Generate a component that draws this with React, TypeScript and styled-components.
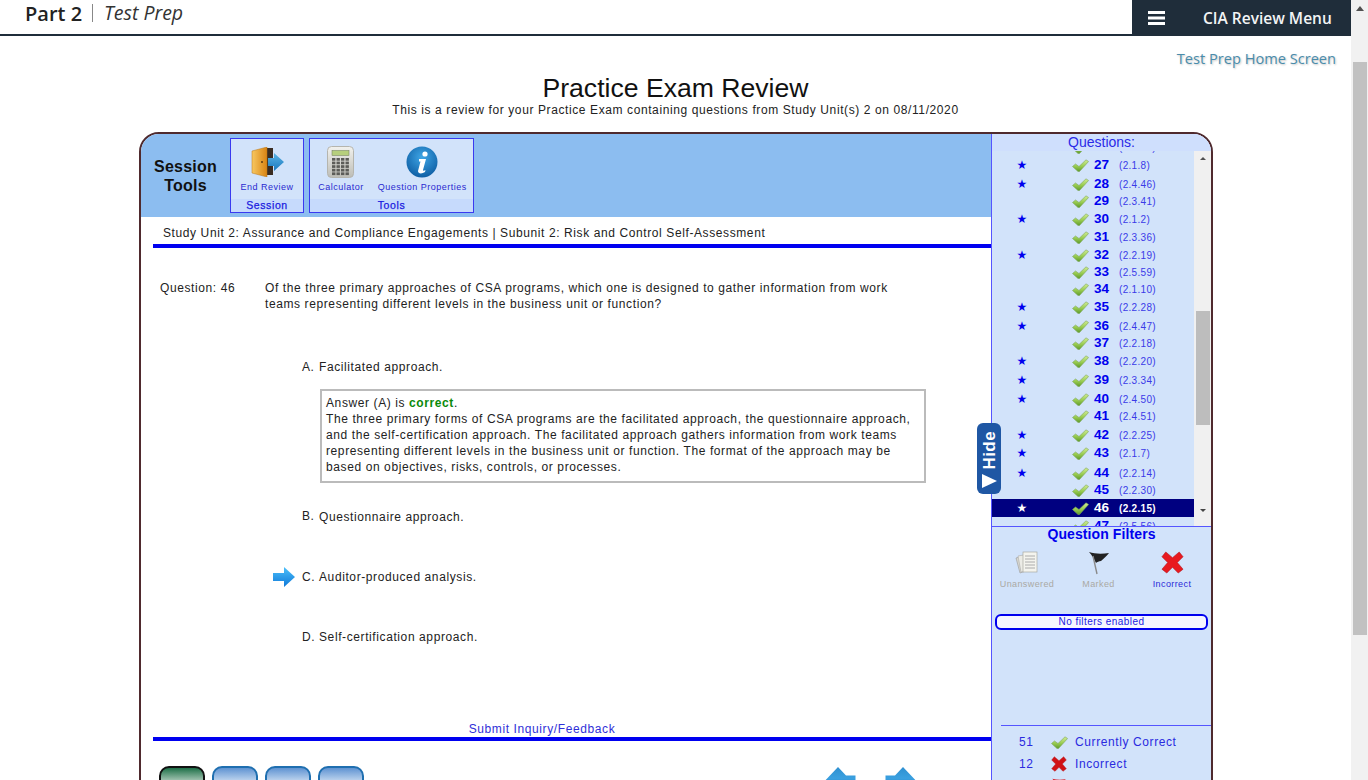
import React, { useId } from "react";
import styled, { createGlobalStyle } from "styled-components";

const Global = createGlobalStyle`
  html, body { margin: 0; padding: 0; overflow: hidden; background: #fff; }
  * { box-sizing: border-box; }
  #root { width: 1368px; height: 780px; overflow: hidden; }
`;

const Shell = styled.div`
  display: flex;
  width: 1368px;
  height: 780px;
  overflow: hidden;
  font-family: "Liberation Sans", Arial, sans-serif;
  font-size: 12px;
  letter-spacing: 0.6px;
  color: #222;
`;
const Page = styled.div`
  width: 1351px;
  flex: none;
  display: flex;
  flex-direction: column;
`;
const PageScroll = styled.div`
  width: 17px;
  flex: none;
  background: #f1f1f1;
  display: flex;
  flex-direction: column;
  align-items: center;
`;
const PageThumb = styled.div`
  width: 14px;
  height: 573px;
  margin-top: 51px;
  background: #c1c1c1;
`;
const ArrowUp = styled.div`
  width: 0;
  height: 0;
  margin-top: 6px;
  border-left: 4px solid transparent;
  border-right: 4px solid transparent;
  border-bottom: 5px solid #505050;
`;
const Header = styled.header`
  height: 36px;
  flex: none;
  display: flex;
  justify-content: space-between;
  border-bottom: 2px solid #1f2d3a;
  font-family: "Open Sans", sans-serif;
  letter-spacing: 0;
`;
const Crumb = styled.div`
  display: flex;
  align-items: center;
  height: 26px;
  padding-left: 25px;
`;
const Part = styled.span`
  font-size: 20px;
  font-weight: 600;
  color: #222;
`;
const Sep = styled.span`
  width: 1px;
  height: 18px;
  margin: 0 11px 0 10px;
  background: #888;
`;
const Prep = styled.span`
  font-size: 19.5px;
  font-style: italic;
  color: #333;
  margin-top: -2px;
`;
const Menu = styled.div`
  width: 219px;
  height: 36px;
  display: flex;
  align-items: center;
  padding: 0 0 0 16px;
  background: #1f2d3a;
  color: #fff;
  font-size: 15.5px;
  font-weight: 600;
`;
const MenuLabel = styled.span`
  margin-left: 38px;
  color: #f2f4f5;
`;
const HomeLink = styled.div`
  margin-top: 12px;
  padding-right: 15px;
  text-align: right;
  font-family: "Open Sans", sans-serif;
  letter-spacing: 0;
  font-size: 14.6px;
  line-height: 20px;
  color: #4a8cab;
  text-shadow: 1px 1px 2px #c4c4c4;
`;
const Title = styled.h1`
  margin: 5px 0 0;
  font-size: 26.6px;
  line-height: 30px;
  font-weight: 400;
  letter-spacing: 0;
  text-align: center;
  color: #111;
`;
const Subtitle = styled.div`
  text-align: center;
  line-height: 14px;
  color: #222;
`;
const Panel = styled.section`
  flex: none;
  width: 1074px;
  height: 700px;
  margin: 15px 0 0 139px;
  display: flex;
  border: 2px solid #4f2a2e;
  border-radius: 20px 20px 0 0;
  overflow: hidden;
`;
const Work = styled.div`
  width: 850px;
  flex: none;
`;
const Toolbar = styled.div`
  height: 83px;
  display: flex;
  padding-top: 4px;
  background: #8cbdf0;
`;
const ToolHeading = styled.div`
  width: 89px;
  padding-top: 19px;
  font-size: 16px;
  line-height: 19px;
  font-weight: 700;
  letter-spacing: 0.2px;
  text-align: center;
  color: #111;
`;
const ToolBox = styled.div<{ $w: number; $inset?: number }>`
  width: ${(p) => p.$w}px;
  height: 75px;
  margin-right: 5px;
  display: flex;
  flex-direction: column;
  border: 1px solid #3a3af0;
  background: #d2e3fa;
`;
const ToolBody = styled.div<{ $inset?: number }>`
  flex: 1;
  display: flex;
  justify-content: center;
  gap: 14px;
  padding-left: ${(p) => p.$inset ?? 0}px;
`;
const ToolItem = styled.div`
  display: flex;
  flex-direction: column;
  align-items: center;
  padding-top: 4px;
  font-size: 9px;
  line-height: 11px;
  letter-spacing: 0.5px;
  color: #2a2ad0;
`;
const ToolIcon = styled.div`
  height: 37px;
  margin-bottom: 2px;
  display: flex;
  align-items: center;
`;
const ToolGroup = styled.div`
  height: 13px;
  background: #c6dafc;
  color: #1a1ae0;
  font-size: 10.5px;
  line-height: 13px;
  font-weight: 400;
  -webkit-text-stroke: 0.25px #1a1ae0;
  text-align: center;
`;
const UnitLine = styled.div`
  height: 27px;
  padding: 9px 0 0 22px;
  line-height: 14px;
`;
const BlueRule = styled.div`
  height: 4px;
  margin-left: 12px;
  background: #0000f0;
`;
const QuestionRow = styled.div`
  display: grid;
  grid-template-columns: 105px 640px;
  margin: 32px 0 0 19px;
  line-height: 16px;
`;
const Options = styled.div`
  margin: 47px 0 0 132px;
`;
const OptionRow = styled.div<{ $gap: number }>`
  display: grid;
  grid-template-columns: 29px 17px 1fr;
  grid-template-rows: 16px;
  margin-top: ${(p) => p.$gap}px;
  line-height: 16px;
  align-items: center;
`;
const OptionKey = styled.span<{ $raised?: boolean }>`
  margin-top: ${(p) => (p.$raised ? -3 : 0)}px;
`;
const Explain = styled.div`
  width: 606px;
  height: 94px;
  margin: 14px 0 0 47px;
  padding: 4px 4px;
  border: 2px solid #bbb;
  line-height: 16px;
`;
const Correct = styled.b`
  color: #0a8a0a;
`;
const Inquiry = styled.div`
  margin: 76px 0 0 12px;
  padding-right: 60px;
  line-height: 16px;
  text-align: center;
  color: #3030d8;
`;
const BottomRule = styled(BlueRule)`
  margin-top: 0;
`;
const AnswerBar = styled.div`
  display: flex;
  margin: 25px 0 0 18px;
  align-items: flex-start;
`;
const Key = styled.div<{ $active?: boolean }>`
  width: 46px;
  height: 40px;
  margin-right: 7px;
  padding-top: 9px;
  border: 2px solid ${(p) => (p.$active ? "#111" : "#1f6fb0")};
  border-radius: 10px;
  background: linear-gradient(
    ${(p) => (p.$active ? "#1e7048, #dbe8e0 50%" : "#5f93d2, #e4eef9 50%")}
  );
  font-size: 17px;
  font-weight: 700;
  text-align: center;
  color: #111;
`;
const Tip = styled.div`
  margin: 12px 0 0 97px;
  width: 12px;
`;
const NavArrows = styled.div`
  display: flex;
  gap: 29px;
  margin: 1px 0 0 340px;
`;
const Side = styled.aside`
  position: relative;
  width: 220px;
  flex: none;
  border-left: 1px solid #5555ff;
  background: #d2e3fa;
`;
const SideHead = styled.div`
  height: 17px;
  background: #cfdffd;
  color: #2a2ae8;
  font-size: 14px;
  line-height: 17px;
  letter-spacing: 0;
  text-align: center;
`;
const ListWrap = styled.div`
  height: 375px;
  display: flex;
  overflow: hidden;
`;
const List = styled.div`
  width: 202px;
  flex: none;
  overflow: hidden;
`;
const ListInner = styled.div`
  margin-top: -13px;
`;
const Row = styled.div<{ $h: number; $on?: boolean }>`
  height: ${(p) => p.$h}px;
  display: grid;
  grid-template-columns: 60px 20px 18px 4px 25px 1fr;
  line-height: 18px;
  color: ${(p) => (p.$on ? "#fff" : "#0000ee")};
  background: ${(p) => (p.$on ? "#000080" : "transparent")};
`;
const Star = styled.span`
  grid-column: 1;
  text-align: center;
  font-size: 12px;
  letter-spacing: 0;
  font-family: "DejaVu Sans", sans-serif;
`;
const RowCheck = styled.span`
  grid-column: 3;
  display: flex;
  align-items: center;
  height: 18px;
`;
const Num = styled.span`
  grid-column: 5;
  font-size: 13.5px;
  font-weight: 700;
  letter-spacing: 0;
`;
const Code = styled.span<{ $on?: boolean }>`
  grid-column: 6;
  padding-top: 1px;
  font-size: 10px;
  color: ${(p) => (p.$on ? "#fff" : "#3a3ae8")};
  font-weight: ${(p) => (p.$on ? 700 : 400)};
  letter-spacing: 0.3px;
`;
const ListScroll = styled.div`
  flex: 1;
  background: #f0f0f0;
  display: flex;
  flex-direction: column;
  align-items: center;
`;
const ListThumb = styled.div`
  width: 14px;
  height: 114px;
  margin-top: 151px;
  background: #bdbdbd;
`;
const ArrowDown = styled.div`
  width: 0;
  height: 0;
  margin-top: 84px;
  border-left: 3px solid transparent;
  border-right: 3px solid transparent;
  border-top: 3px solid #444;
`;
const SmallUp = styled(ArrowUp)`
  border-left-width: 3px;
  border-right-width: 3px;
  border-bottom-width: 3px;
`;
const Filters = styled.div`
  height: 199px;
  border-top: 1px solid #5555ff;
`;
const FilterTitle = styled.div`
  font-size: 14px;
  line-height: 15px;
  font-weight: 700;
  letter-spacing: 0.1px;
  text-align: center;
  color: #0000ee;
`;
const FilterGrid = styled.div`
  display: grid;
  grid-template-columns: 70px 73px 74px;
  margin-top: 6px;
`;
const FilterItem = styled.div<{ $on?: boolean }>`
  display: flex;
  flex-direction: column;
  align-items: center;
  font-size: 9px;
  line-height: 11px;
  letter-spacing: 0.4px;
  color: ${(p) => (p.$on ? "#2a2ad8" : "#aaa9a4")};
`;
const FilterIcon = styled.div`
  height: 29px;
  margin-bottom: 2px;
  display: flex;
  align-items: center;
`;
const Pill = styled.div`
  height: 16px;
  margin: 24px 3px 0;
  border: 2px solid #0000ee;
  border-radius: 6px;
  background: #f6f6ff;
  font-size: 10px;
  line-height: 12px;
  letter-spacing: 0.45px;
  text-align: center;
  color: #1a1ae0;
`;
const Legend = styled.div`
  margin-left: 9px;
  padding-top: 5px;
  border-top: 1px solid #5555ff;
`;
const LegendRow = styled.div`
  display: grid;
  grid-template-columns: 32px 18px 1fr;
  align-items: center;
  height: 22px;
  padding-left: 18px;
  color: #2a2ae0;
`;
const LegendLabel = styled.span`
  padding-left: 6px;
`;
const HideTab = styled.div`
  position: absolute;
  left: -15px;
  top: 289px;
  width: 24px;
  height: 71px;
  display: flex;
  flex-direction: column;
  align-items: center;
  justify-content: flex-end;
  gap: 5px;
  padding-bottom: 6px;
  border-radius: 6px;
  background: #1f57a4;
  color: #fff;
`;
const HideText = styled.span`
  writing-mode: vertical-rl;
  transform: rotate(180deg);
  font-size: 17px;
  line-height: 17px;
  font-weight: 700;
  letter-spacing: 0.4px;
`;

const Check = ({ w = 17 }: { w?: number }) => {
  const id = useId();
  return (
    <svg width={w} height={(w * 13) / 17} viewBox="0 0 17 13">
      <defs>
        <linearGradient id={id} x1="0" y1="0" x2="0" y2="1">
          <stop offset="0" stopColor="#d2ec96" />
          <stop offset=".55" stopColor="#98cc50" />
          <stop offset="1" stopColor="#5f9a2c" />
        </linearGradient>
      </defs>
      <path d="M.5 7.500L3.500 5 7 7.500 14 .8l2.600 1.700L7.500 12.500H6z" fill={`url(#${id})`} stroke="#7ca65c" strokeWidth="0.6" strokeLinejoin="round" />
    </svg>
  );
};
const Cross = ({ s = 23, fill = "#e8191f" }: { s?: number; fill?: string }) => (
  <svg width={s} height={s} viewBox="0 0 24 24">
    <path d="M5 1l7 6 7-6 4 5-6 6 6 7-5 4-6-6-6 6-5-4 6-7-6-6z" fill={fill} stroke="#b3141a" strokeWidth="0.6" strokeLinejoin="round" />
  </svg>
);
const RedFlag = () => (
  <svg width="16" height="16" viewBox="0 0 22 24">
    <path d="M1 1c6 2 13 2 20 1-2 3-5 5-8 8-2 0-4 1-5 2C6 8 4 4 1 1z" fill="#d81820" />
  </svg>
);
const Flag = () => (
  <svg width="22" height="24" viewBox="0 0 22 24">
    <path d="M1 1c6 2 13 2 20 1-2 3-5 5-8 8-2 0-4 1-5 2C6 8 4 4 1 1z" fill="#222" />
    <path d="M5 5l4 18" stroke="#8a8a8a" strokeWidth="1.4" />
  </svg>
);
const Papers = () => (
  <svg width="24" height="24" viewBox="0 0 24 24">
    <path d="M1 7l10-3 3 15-9 3z" fill="#d8d8d0" stroke="#999" strokeWidth=".6" />
    <path d="M3 5l11-2 2 16-10 2z" fill="#ecece6" stroke="#aaa" strokeWidth=".6" />
    <rect x="8" y="1" width="14" height="20" fill="#f4f4ee" stroke="#a8a8a0" strokeWidth=".7" />
    <path d="M10 5h10M10 8h10M10 11h10M10 14h10M10 17h10" stroke="#999" strokeWidth=".8" />
  </svg>
);
const Door = () => (
  <svg width="33" height="30" viewBox="0 0 33 30">
    <defs>
      <linearGradient id="doorG" x1="0" y1="0" x2="1" y2="0">
        <stop offset="0" stopColor="#f7c760" />
        <stop offset="1" stopColor="#d98414" />
      </linearGradient>
      <linearGradient id="doorA" x1="0" y1="0" x2="0" y2="1">
        <stop offset="0" stopColor="#5bb4e6" />
        <stop offset="1" stopColor="#1a78bd" />
      </linearGradient>
    </defs>
    <rect x="13" y="1" width="9" height="27" fill="#3a2c22" />
    <path d="M1 4L16 0v30L1 26z" fill="url(#doorG)" stroke="#b87414" strokeWidth=".5" />
    <circle cx="11" cy="15" r="1" fill="#5a3a10" />
    <path d="M17 11h6V6l10 9-10 9v-5h-6z" fill="url(#doorA)" />
  </svg>
);
const Calc = () => (
  <svg width="27" height="32" viewBox="0 0 27 32">
    <defs>
      <linearGradient id="calcG" x1="0" y1="0" x2="0" y2="1">
        <stop offset="0" stopColor="#f2f2ee" />
        <stop offset="1" stopColor="#bdbdb6" />
      </linearGradient>
    </defs>
    <rect x="0.5" y="0.5" width="26" height="31" rx="4" fill="url(#calcG)" stroke="#b5b5ae" />
    <rect x="5" y="4.500" width="17" height="5" fill="#b6cf7c" stroke="#6d7a58" strokeWidth=".5" />
    {[0, 1, 2, 3, 4].map((r) =>
      [0, 1, 2, 3].map((c) => (
        <rect key={`${r}-${c}`} x={5 + c * 4.5} y={12 + r * 3.6} width="3.4" height="2.7" fill="#5c5c58" />
      ))
    )}
  </svg>
);
const Info = () => (
  <svg width="32" height="32" viewBox="0 0 32 32">
    <defs>
      <radialGradient id="infoG" cx=".5" cy=".35" r=".7">
        <stop offset="0" stopColor="#3fa6e6" />
        <stop offset="1" stopColor="#0b5aa0" />
      </radialGradient>
    </defs>
    <circle cx="16" cy="16" r="15.500" fill="url(#infoG)" />
    <circle cx="19" cy="8" r="2.600" fill="#fff" />
    <path d="M13 13h7l-3 11c-.2 1 .8 1 2.500 0l-.5 2c-3 2-7 2-7-1l2.500-9.500H13z" fill="#fff" />
  </svg>
);
const BlueArrow = () => {
  const id = useId();
  return (
    <svg width="22" height="20" viewBox="0 0 22 20">
      <defs>
        <linearGradient id={id} x1="0" y1="0" x2="0" y2="1">
          <stop offset="0" stopColor="#4cc0fa" />
          <stop offset="1" stopColor="#0f78d8" />
        </linearGradient>
      </defs>
      <path d="M0 6h11V0l11 10-11 10v-6H0z" fill={`url(#${id})`} />
    </svg>
  );
};
const NavArrow = ({ flip }: { flip?: boolean }) => {
  const id = useId();
  return (
    <svg width="36" height="30" viewBox="0 0 36 30" style={flip ? { transform: "scaleX(-1)" } : undefined}>
      <defs>
        <linearGradient id={id} x1="0" y1="0" x2="0" y2="1">
          <stop offset="0" stopColor="#2e8fd0" />
          <stop offset=".4" stopColor="#3aa0e0" />
          <stop offset="1" stopColor="#1a6cb4" />
        </linearGradient>
      </defs>
      <path d="M0 19L18 0l8 8.500h9.500V28H18z" fill={`url(#${id})`} />
    </svg>
  );
};
const Burger = () => (
  <svg width="17" height="14" viewBox="0 0 17 14">
    <path d="M0 1.500h17M0 7h17M0 12.500h17" stroke="#fff" strokeWidth="3" />
  </svg>
);
const Triangle = () => (
  <svg width="15" height="14" viewBox="0 0 15 14">
    <path d="M0 0l15 7L0 14z" fill="#fff" />
  </svg>
);
const TipArrow = () => (
  <svg width="12" height="4" viewBox="0 0 12 4">
    <path d="M6 0l4 4H2z" fill="#2e8fd0" />
  </svg>
);

const rows: [number, string, boolean, number][] = [
  [26, "2.3.30", false, 18],
  [27, "2.1.8", true, 19],
  [28, "2.4.46", true, 17],
  [29, "2.3.41", false, 18],
  [30, "2.1.2", true, 18],
  [31, "2.3.36", false, 18],
  [32, "2.2.19", true, 17],
  [33, "2.5.59", false, 17],
  [34, "2.1.10", false, 18],
  [35, "2.2.28", true, 19],
  [36, "2.4.47", true, 17],
  [37, "2.2.18", false, 18],
  [38, "2.2.20", true, 19],
  [39, "2.3.34", true, 19],
  [40, "2.4.50", true, 17],
  [41, "2.4.51", false, 19],
  [42, "2.2.25", true, 18],
  [43, "2.1.7", true, 20],
  [44, "2.2.14", true, 17],
  [45, "2.2.30", false, 18],
  [46, "2.2.15", true, 18],
  [47, "2.5.56", false, 18],
];

export default function App() {
  return (
    <Shell>
      <Global />
      <Page>
        <Header>
          <Crumb>
            <Part>Part 2</Part>
            <Sep />
            <Prep>Test Prep</Prep>
          </Crumb>
          <Menu>
            <Burger />
            <MenuLabel>CIA Review Menu</MenuLabel>
          </Menu>
        </Header>
        <HomeLink>Test Prep Home Screen</HomeLink>
        <Title>Practice Exam Review</Title>
        <Subtitle>This is a review for your Practice Exam containing questions from Study Unit(s) 2 on 08/11/2020</Subtitle>
        <Panel>
          <Work>
            <Toolbar>
              <ToolHeading>
                Session
                <br />
                Tools
              </ToolHeading>
              <ToolBox $w={74}>
                <ToolBody>
                  <ToolItem>
                    <ToolIcon><Door /></ToolIcon>
                    End Review
                  </ToolItem>
                </ToolBody>
                <ToolGroup>Session</ToolGroup>
              </ToolBox>
              <ToolBox $w={165}>
                <ToolBody $inset={2}>
                  <ToolItem>
                    <ToolIcon><Calc /></ToolIcon>
                    Calculator
                  </ToolItem>
                  <ToolItem>
                    <ToolIcon><Info /></ToolIcon>
                    Question Properties
                  </ToolItem>
                </ToolBody>
                <ToolGroup>Tools</ToolGroup>
              </ToolBox>
            </Toolbar>
            <UnitLine>Study Unit 2: Assurance and Compliance Engagements | Subunit 2: Risk and Control Self-Assessment</UnitLine>
            <BlueRule />
            <QuestionRow>
              <span>Question: 46</span>
              <span>
                Of the three primary approaches of CSA programs, which one is designed to gather information from work teams
                representing different levels in the business unit or function?
              </span>
            </QuestionRow>
            <Options>
              <OptionRow $gap={0}>
                <span />
                <OptionKey>A.</OptionKey>
                <span>Facilitated approach.</span>
              </OptionRow>
              <Explain>
                Answer (A) is <Correct>correct</Correct>.
                <br />
                The three primary forms of CSA programs are the facilitated approach, the questionnaire approach, and the
                self-certification approach. The facilitated approach gathers information from work teams representing
                different levels in the business unit or function. The format of the approach may be based on objectives,
                risks, controls, or processes.
              </Explain>
              <OptionRow $gap={26}>
                <span />
                <OptionKey $raised>B.</OptionKey>
                <span>Questionnaire approach.</span>
              </OptionRow>
              <OptionRow $gap={44}>
                <BlueArrow />
                <OptionKey>C.</OptionKey>
                <span>Auditor-produced analysis.</span>
              </OptionRow>
              <OptionRow $gap={44}>
                <span />
                <OptionKey>D.</OptionKey>
                <span>Self-certification approach.</span>
              </OptionRow>
            </Options>
            <Inquiry>Submit Inquiry/Feedback</Inquiry>
            <BottomRule />
            <AnswerBar>
              <Key $active>A</Key>
              <Key>B</Key>
              <Key>C</Key>
              <Key>D</Key>
              <Tip><TipArrow /></Tip>
              <NavArrows>
                <NavArrow />
                <NavArrow flip />
              </NavArrows>
            </AnswerBar>
          </Work>
          <Side>
            <SideHead>Questions:</SideHead>
            <ListWrap>
              <List>
                <ListInner>
                  {rows.map(([n, code, star, h]) => (
                    <Row key={n} $h={h} $on={n === 46}>
                      {star && <Star>★</Star>}
                      <RowCheck><Check /></RowCheck>
                      <Num>{n}</Num>
                      <Code $on={n === 46}>({code})</Code>
                    </Row>
                  ))}
                </ListInner>
              </List>
              <ListScroll>
                <SmallUp />
                <ListThumb />
                <ArrowDown />
              </ListScroll>
            </ListWrap>
            <Filters>
              <FilterTitle>Question Filters</FilterTitle>
              <FilterGrid>
                <FilterItem>
                  <FilterIcon><Papers /></FilterIcon>
                  Unanswered
                </FilterItem>
                <FilterItem>
                  <FilterIcon><Flag /></FilterIcon>
                  Marked
                </FilterItem>
                <FilterItem $on>
                  <FilterIcon><Cross /></FilterIcon>
                  Incorrect
                </FilterItem>
              </FilterGrid>
              <Pill>No filters enabled</Pill>
            </Filters>
            <Legend>
              <LegendRow>
                <span>51</span>
                <Check />
                <LegendLabel>Currently Correct</LegendLabel>
              </LegendRow>
              <LegendRow>
                <span>12</span>
                <Cross s={16} fill="#d01216" />
                <LegendLabel>Incorrect</LegendLabel>
              </LegendRow>
              <LegendRow>
                <span>0</span>
                <RedFlag />
                <LegendLabel>Marked</LegendLabel>
              </LegendRow>
            </Legend>
            <HideTab>
              <HideText>Hide</HideText>
              <Triangle />
            </HideTab>
          </Side>
        </Panel>
      </Page>
      <PageScroll>
        <ArrowUp />
        <PageThumb />
      </PageScroll>
    </Shell>
  );
}
